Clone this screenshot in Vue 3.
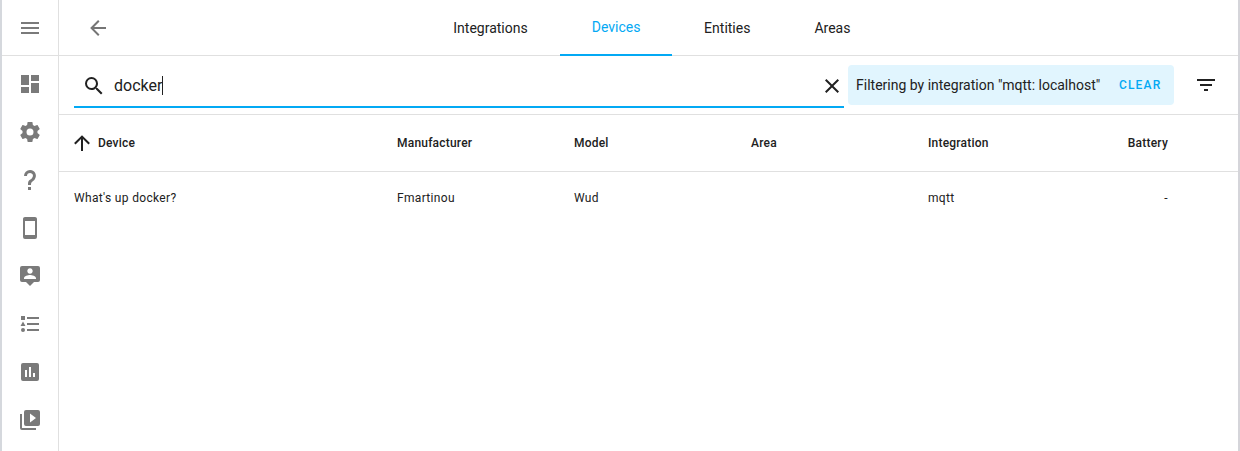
<script setup>
const sidebar = [
  { name: 'dashboard', path: 'M13,3V9H21V3M13,21H21V11H13M3,21H11V15H3M3,13H11V3H3V13Z' },
  { name: 'settings', path: 'M12,15.5A3.5,3.5 0 0,1 8.5,12A3.5,3.5 0 0,1 12,8.5A3.5,3.5 0 0,1 15.5,12A3.5,3.5 0 0,1 12,15.5M19.43,12.97C19.47,12.65 19.5,12.33 19.5,12C19.5,11.67 19.47,11.34 19.43,11L21.54,9.37C21.73,9.22 21.78,8.95 21.66,8.73L19.66,5.27C19.54,5.05 19.27,4.96 19.05,5.05L16.56,6.05C16.04,5.66 15.5,5.32 14.87,5.07L14.5,2.42C14.46,2.18 14.25,2 14,2H10C9.75,2 9.54,2.18 9.5,2.42L9.13,5.07C8.5,5.32 7.96,5.66 7.44,6.05L4.95,5.05C4.73,4.96 4.46,5.05 4.34,5.27L2.34,8.73C2.21,8.95 2.27,9.22 2.46,9.37L4.57,11C4.53,11.34 4.5,11.67 4.5,12C4.5,12.33 4.53,12.65 4.57,12.97L2.46,14.63C2.27,14.78 2.21,15.05 2.34,15.27L4.34,18.73C4.46,18.95 4.73,19.03 4.95,18.95L7.44,17.94C7.96,18.34 8.5,18.68 9.13,18.93L9.5,21.58C9.54,21.82 9.75,22 10,22H14C14.25,22 14.46,21.82 14.5,21.58L14.87,18.93C15.5,18.67 16.04,18.34 16.56,17.94L19.05,18.95C19.27,19.03 19.54,18.95 19.66,18.73L21.66,15.27C21.78,15.05 21.73,14.78 21.54,14.63L19.43,12.97Z' },
  { name: 'help', path: 'M10,19H13V22H10V19M12,2C17.35,2.22 19.68,7.62 16.5,11.67C15.67,12.67 14.33,13.33 13.67,14.17C13,15 13,16 13,17H10C10,15.33 10,13.92 10.67,12.92C11.33,11.92 12.67,11.33 13.5,10.67C15.92,8.43 15.32,5.26 12,5A3,3 0 0,0 9,8H6A6,6 0 0,1 12,2Z' },
  { name: 'phone', path: 'M17,19H7V5H17M17,1H7C5.89,1 5,1.89 5,3V21A2,2 0 0,0 7,23H17A2,2 0 0,0 19,21V3C19,1.89 18.1,1 17,1Z' },
  { name: 'person', path: 'M20,2H4A2,2 0 0,0 2,4V16A2,2 0 0,0 4,18H8L12,22L16,18H20A2,2 0 0,0 22,16V4A2,2 0 0,0 20,2M12,4.3C13.5,4.3 14.7,5.5 14.7,7C14.7,8.5 13.5,9.7 12,9.7C10.5,9.7 9.3,8.5 9.3,7C9.3,5.5 10.5,4.3 12,4.3M18,15H6V14.1C6,12.1 10,11 12,11C14,11 18,12.1 18,14.1V15Z' },
  { name: 'logbook', path: 'M5,9.5L7.5,14H2.5L5,9.5M3,4H7V8H3V4M5,20A2,2 0 0,0 7,18A2,2 0 0,0 5,16A2,2 0 0,0 3,18A2,2 0 0,0 5,20M9,5V7H21V5H9M9,19H21V17H9V19M9,13H21V11H9V13Z' },
  { name: 'history', path: 'M19,3H5A2,2 0 0,0 3,5V19A2,2 0 0,0 5,21H19A2,2 0 0,0 21,19V5A2,2 0 0,0 19,3M9,17H7V10H9V17M13,17H11V7H13V17M17,17H15V13H17V17Z' },
  { name: 'media', path: 'M4,6H2V20A2,2 0 0,0 4,22H18V20H4V6M20,2H8A2,2 0 0,0 6,4V16A2,2 0 0,0 8,18H20A2,2 0 0,0 22,16V4A2,2 0 0,0 20,2M12,14.5V5.5L18,10L12,14.5Z' },
]
const tabs = ['Integrations', 'Devices', 'Entities', 'Areas']
const columns = ['Device', 'Manufacturer', 'Model', 'Area', 'Integration', 'Battery']
const rows = [["What's up docker?", 'Fmartinou', 'Wud', '', 'mqtt', '-']]
</script>

<template>
  <div class="app">
    <nav class="sidebar">
      <div class="menu">
        <svg viewBox="0 0 24 24"><path d="M3,6H21V8H3V6M3,11H21V13H3V11M3,16H21V18H3V16Z" /></svg>
      </div>
      <a v-for="item in sidebar" :key="item.name" class="side-item">
        <svg viewBox="0 0 24 24"><path :d="item.path" /></svg>
      </a>
    </nav>
    <main class="main">
      <header class="toolbar">
        <svg class="back" viewBox="0 0 24 24"><path d="M20,11V13H8L13.5,18.5L12.08,19.92L4.16,12L12.08,4.08L13.5,5.5L8,11H20Z" /></svg>
        <div class="tabs">
          <div v-for="tab in tabs" :key="tab" class="tab" :class="{ active: tab === 'Devices' }">{{ tab }}</div>
        </div>
      </header>
      <section class="search-row">
        <div class="search">
          <svg viewBox="0 0 24 24"><path d="M9.5,3A6.5,6.5 0 0,1 16,9.5C16,11.11 15.41,12.59 14.44,13.73L14.71,14H15.5L20.5,19L19,20.5L14,15.5V14.71L13.73,14.44C12.59,15.41 11.11,16 9.5,16A6.5,6.5 0 0,1 3,9.5A6.5,6.5 0 0,1 9.5,3M9.5,5C7,5 5,7 5,9.5C5,12 7,14 9.5,14C12,14 14,12 14,9.5C14,7 12,5 9.5,5Z" /></svg>
          <span class="query">docker</span><span class="caret"></span>
          <svg class="close" viewBox="0 0 24 24"><path d="M19,6.41L17.59,5L12,10.59L6.41,5L5,6.41L10.59,12L5,17.59L6.41,19L12,13.41L17.59,19L19,17.59L13.41,12L19,6.41Z" /></svg>
        </div>
        <div class="chip">
          <span>Filtering by integration "mqtt: localhost"</span>
          <span class="clear">CLEAR</span>
        </div>
        <svg class="filter" viewBox="0 0 24 24"><path d="M6,13H18V11H6M3,6V8H21V6M10,18H14V16H10V18Z" /></svg>
      </section>
      <div class="row head">
        <div v-for="(c, i) in columns" :key="c" class="cell">
          <svg v-if="i === 0" viewBox="0 0 24 24"><path d="M13,20H11V8L5.5,13.5L4.08,12.08L12,4.16L19.92,12.08L18.5,13.5L13,8V20Z" /></svg>
          <span>{{ c }}</span>
        </div>
      </div>
      <div v-for="(r, i) in rows" :key="i" class="row">
        <div v-for="(v, j) in r" :key="j" class="cell">{{ v }}</div>
      </div>
    </main>
  </div>
</template>

<style>
body { margin: 0; background: #fff; }
</style>
<style scoped>
.app {
  box-sizing: border-box;
  display: flex;
  height: 451px;
  border-left: 2px solid #d5d8dd;
  border-right: 2px solid #d5d5da;
  font-family: Roboto, sans-serif;
  font-size: 14px;
  color: #212121;
  overflow: hidden;
}
svg { width: 24px; height: 24px; fill: currentColor; flex: none; display: block; }
.sidebar { width: 56px; border-right: 1px solid #e0e0e0; color: #7a7a7a; flex: none; }
.menu { height: 55px; border-bottom: 1px solid #e0e0e0; display: flex; align-items: center; justify-content: center; margin-bottom: 4px; }
.side-item { height: 48px; display: flex; align-items: center; justify-content: center; }
.main { flex: 1; min-width: 0; }
.toolbar { height: 55px; border-bottom: 1px solid #e0e0e0; display: flex; align-items: center; padding: 0 16px 0 27px; }
.back { color: #757575; }
.tabs { display: flex; height: 56px; align-self: flex-start; margin-left: 311.3px; }
.tab { box-sizing: border-box; height: 56px; padding: 0 32px; line-height: 56px; }
.tab.active { width: 112.4px; color: #03a9f4; border-bottom: 2px solid #03a9f4; line-height: 54px; }
.search-row { height: 58px; border-bottom: 1px solid #e0e0e0; display: flex; padding-left: 15px; }
.search { box-sizing: border-box; width: 770px; height: 52px; border-bottom: 2px solid #03a9f4; display: flex; align-items: center; padding: 9px 0 0 8px; }
.query { font-size: 16px; margin-left: 8px; }
.caret { width: 1px; height: 19px; background: #212121; }
.close { margin-left: auto; }
.chip { box-sizing: border-box; width: 326px; height: 40px; margin: 9px 0 0 4px; padding: 0 12.5px 0 8px; border-radius: 4px; background: #e1f5fe; display: flex; align-items: center; justify-content: space-between; white-space: nowrap; }
.clear { color: #03a9f4; font-size: 12px; font-weight: 500; letter-spacing: 1.2px; }
.filter { margin: 17px 0 0 20px; }
.row { display: grid; grid-template-columns: 323px 177px 177px 177px 177px 63px; padding-left: 15px; height: 52px; align-items: center; font-size: 12px; letter-spacing: 0.33px; }
.row.head { height: 56px; border-bottom: 1px solid #e0e0e0; font-weight: 500; letter-spacing: 0.21px; }
.cell { display: flex; align-items: center; }
.cell:last-child { justify-content: flex-end; }
.cell svg { margin: 0 4px 0 -4px; }
</style>
